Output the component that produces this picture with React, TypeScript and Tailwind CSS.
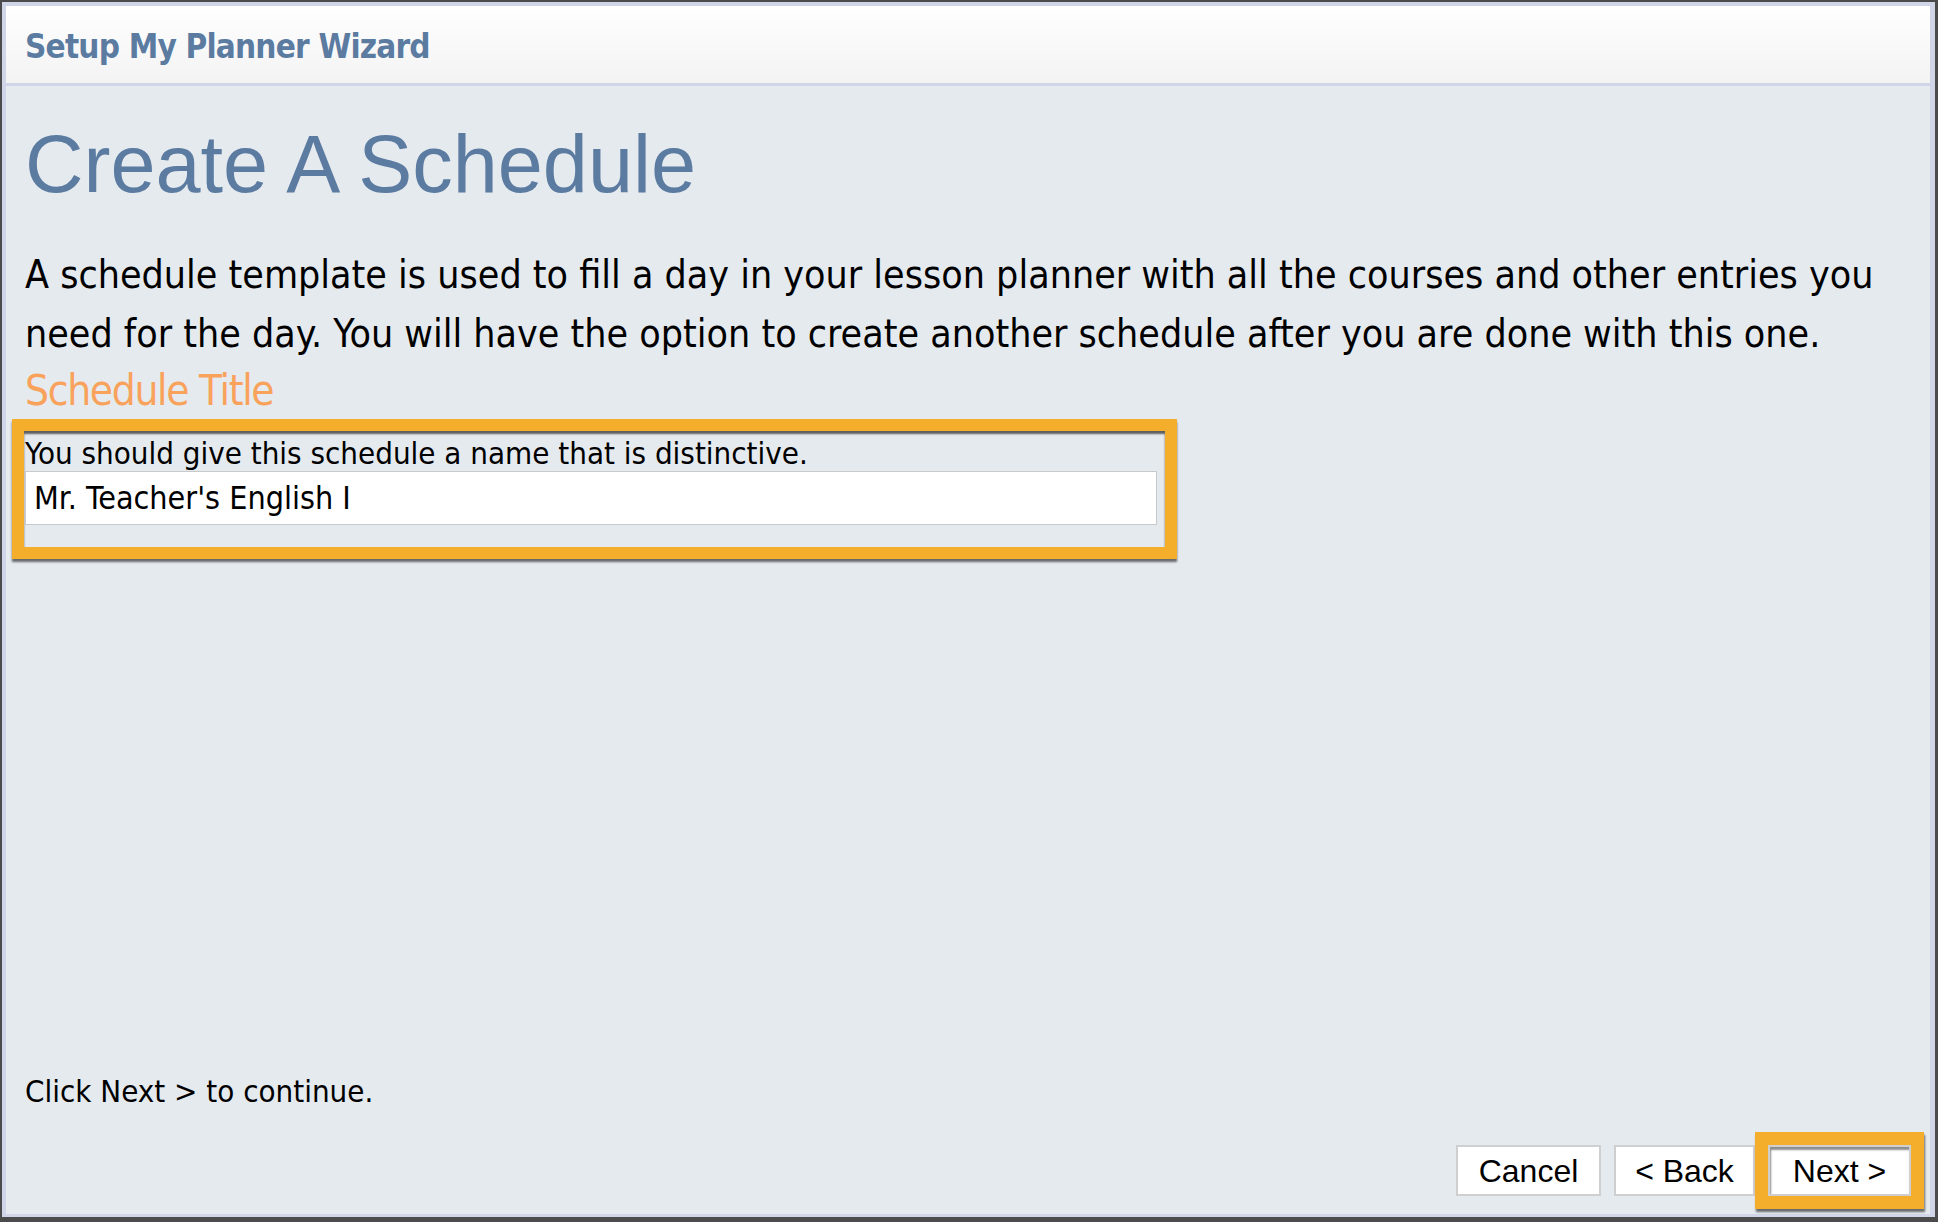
import React from "react";

const tahoma = "font-['DejaVu_Sans_Condensed','DejaVu_Sans',sans-serif]";
const arial = "font-['Liberation_Sans',Arial,sans-serif]";

function WizardButton({ label, width, highlight }: { label: string; width: string; highlight?: boolean }) {
  return (
    <button
      className={`${arial} ${width} relative flex h-[51px] items-center justify-center border-2 border-[#cfcfcf] bg-white text-[32px] leading-none text-black ${
        highlight
          ? "z-10 shadow-[inset_1px_3px_2px_rgba(0,0,0,0.45),0_0_0_13px_#f4ae2c,1px_3px_2px_13px_rgba(0,0,0,0.55)]"
          : ""
      }`}
    >
      {label}
    </button>
  );
}

export default function App() {
  return (
    <div className="h-[1222px] w-full border-t-2 border-r-[3px] border-b-[5px] border-l-2 border-[#4b4b4b]">
      <div className="flex h-full flex-col border-t-4 border-r-[5px] border-b-[3px] border-l-4 border-[#d1d5e8]">
        {/* header */}
        <div className="flex h-[80px] shrink-0 items-center border-b-[3px] border-[#d1d5e8] bg-gradient-to-b from-white to-[#f3f3f3] pt-[4px] pl-[19px]">
          <h2 className={`${tahoma} text-[33px] font-bold leading-none tracking-[-0.8px] text-[#5b7ba1]`}>
            Setup My Planner Wizard
          </h2>
        </div>

        {/* body */}
        <div className="flex flex-1 flex-col bg-[#e5eaef] pr-[19px] pb-[18px] pl-[19px]">
          <h1 className={`${arial} mt-[38px] text-[81px] leading-none text-[#5b7ba1]`}>
            Create A Schedule
          </h1>

          <p className={`${tahoma} mt-[40px] text-[39px] leading-[59px] text-black`}>
            A schedule template is used to fill a day in your lesson planner with all the courses and other entries you
            need for the day. You will have the option to create another schedule after you are done with this one.
          </p>

          <div className={`${tahoma} text-[42px] leading-[56px] tracking-[-1.3px] text-[#f9a25c]`}>Schedule Title</div>

          {/* highlighted field */}
          <div className="-ml-[13px] h-[140px] w-[1165px] border-[12px] border-[#f4ae2c] shadow-[0_3px_2px_rgba(0,0,0,0.55)]">
            <div className="flex h-full flex-col pt-[3px] pl-px pr-[8px] shadow-[inset_0_3px_2px_rgba(0,0,0,0.6)]">
              <label className={`${tahoma} text-[31px] leading-[38px] text-black`}>
                You should give this schedule a name that is distinctive.
              </label>
              <input
                defaultValue="Mr. Teacher's English I"
                className={`${tahoma} -mt-px h-[54px] w-full border border-[#c9c9c9] bg-white px-[8px] text-[32px] text-black outline-none`}
              />
            </div>
          </div>

          <div className="flex-1" />

          <p className={`${tahoma} mb-[35px] text-[31px] leading-[38px] text-black`}>Click Next &gt; to continue.</p>

          <div className="flex justify-end gap-[13px]">
            <WizardButton label="Cancel" width="w-[145px]" />
            <WizardButton label="< Back" width="w-[141px]" />
            <WizardButton label="Next >" width="w-[143px]" highlight />
          </div>
        </div>
      </div>
    </div>
  );
}
